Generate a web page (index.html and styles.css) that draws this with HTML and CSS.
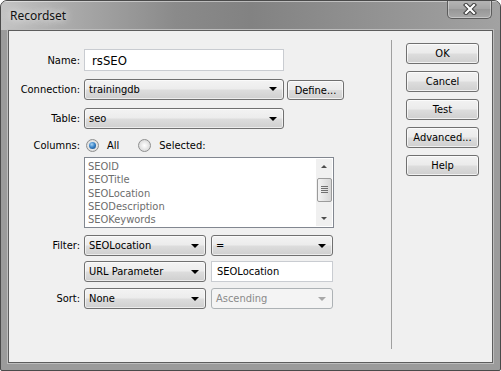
FILE: index.html
```html
<!DOCTYPE html>
<html>
<head>
<meta charset="utf-8">
<link rel="stylesheet" href="styles.css">
</head>
<body>
<div class="window">
  <div class="titlebar">
    <span class="title">Recordset</span>
    <div class="close">
      <svg width="18" height="12" viewBox="0 0 18 12">
        <path d="M5 2 L13 10 M13 2 L5 10" stroke="#3c3c3c" stroke-width="4.2" stroke-linecap="square" fill="none"/>
        <path d="M5 2 L13 10 M13 2 L5 10" stroke="#ffffff" stroke-width="2.2" stroke-linecap="square" fill="none"/>
      </svg>
    </div>
  </div>
  <div class="client">
    <div class="form">
      <div class="row r-name">
        <label class="lbl">Name:</label>
        <div class="textbox big">rsSEO</div>
      </div>
      <div class="row r-conn">
        <label class="lbl">Connection:</label>
        <div class="combo w200"><span>trainingdb</span><i class="arrow"></i></div>
        <div class="btn define">Define...</div>
      </div>
      <div class="row r-table">
        <label class="lbl">Table:</label>
        <div class="combo w200"><span>seo</span><i class="arrow"></i></div>
      </div>
      <div class="row r-cols">
        <label class="lbl">Columns:</label>
        <span class="radio on"></span><span class="rtext">All</span>
        <span class="radio"></span><span class="rtext">Selected:</span>
      </div>
      <div class="row r-list">
        <div class="listbox">
          <div class="items">
            <div>SEOID</div>
            <div>SEOTitle</div>
            <div>SEOLocation</div>
            <div>SEODescription</div>
            <div>SEOKeywords</div>
          </div>
          <div class="scroll">
            <svg class="sarrow" width="16" height="16" viewBox="0 0 16 16"><path d="M5 9 L11 9 L8 6 Z" fill="#4d4d4d"/></svg>
            <div class="thumb">
              <svg width="7" height="8" viewBox="0 0 7 8"><path d="M0 0.5H7M0 2.5H7M0 4.5H7M0 6.5H7" stroke="#6f6f6f" stroke-width="1"/></svg>
            </div>
            <svg class="sarrow down" width="16" height="16" viewBox="0 0 16 16"><path d="M5 7 L11 7 L8 10 Z" fill="#4d4d4d"/></svg>
          </div>
        </div>
      </div>
      <div class="row r-filter">
        <label class="lbl">Filter:</label>
        <div class="combo w123"><span>SEOLocation</span><i class="arrow"></i></div>
        <div class="combo w123"><span>=</span><i class="arrow"></i></div>
      </div>
      <div class="row r-url">
        <label class="lbl"></label>
        <div class="combo w123"><span>URL Parameter</span><i class="arrow"></i></div>
        <div class="textbox w123">SEOLocation</div>
      </div>
      <div class="row r-sort">
        <label class="lbl">Sort:</label>
        <div class="combo w123"><span>None</span><i class="arrow"></i></div>
        <div class="combo w123 disabled"><span>Ascending</span><i class="arrow"></i></div>
      </div>
    </div>
    <div class="side">
      <div class="btn">OK</div>
      <div class="btn">Cancel</div>
      <div class="btn">Test</div>
      <div class="btn">Advanced...</div>
      <div class="btn">Help</div>
    </div>
  </div>
</div>
</body>
</html>
```
FILE: styles.css
```css
html, body {
  margin: 0;
  padding: 0;
  background: #ffffff;
}
body {
  font-family: "DejaVu Sans Condensed", "DejaVu Sans", sans-serif;
  font-stretch: condensed;
  font-size: 11px;
  color: #000;
}
.window {
  width: 501px;
  height: 371px;
  box-sizing: border-box;
  border: 1px solid #4a4a4a;
  border-radius: 7px 7px 2px 2px;
  background: #9b9b9b;
  padding: 0 7px 7px 7px;
  display: flex;
  flex-direction: column;
  overflow: hidden;
}
.titlebar {
  height: 29px;
  margin: 0 -7px;
  padding: 0 8px 0 9px;
  background: linear-gradient(90deg, #c4c4c4 0%, #adadad 12%, #8a8a8a 35%, #828282 50%, #8f8f8f 70%, #a2a2a2 100%);
  display: flex;
  justify-content: space-between;
  align-items: flex-start;
  box-shadow: inset 0 1px 0 rgba(255,255,255,0.45);
}
.title {
  font-family: "Noto Sans", "Open Sans", sans-serif;
  font-stretch: normal;
  font-size: 12px;
  margin-top: 6px;
  color: #111;
  text-shadow: 0 0 6px #e8e8e8, 0 0 10px #e0e0e0;
}
.close {
  width: 43px;
  height: 18px;
  margin-top: -1px;
  border: 1px solid #5c5c5c;
  border-top: none;
  border-radius: 0 0 5px 5px;
  background: linear-gradient(#b6b6b6, #a4a4a4 50%, #979797 51%, #a9a9a9);
  box-shadow: inset 0 0 0 1px rgba(255,255,255,0.35);
  display: flex;
  align-items: center;
  justify-content: center;
}
.client {
  flex: 1;
  border: 1px solid #5d5d5d;
  background: #f0f0f0;
  display: flex;
  box-shadow: 0 0 0 1px #bdbdbd;
}
.form {
  width: 382px;
  padding-top: 18px;
  display: flex;
  flex-direction: column;
}
.row {
  display: flex;
  align-items: center;
}
.lbl {
  width: 71px;
  margin-right: 4px;
  text-align: right;
  flex: none;
}
.r-conn { margin-top: 7px; }
.r-table { margin-top: 8px; }
.r-cols { margin-top: 7px; height: 19px; }
.r-list { margin-top: 2px; padding-left: 75px; }
.r-filter { margin-top: 7px; }
.r-url { margin-top: 5px; }
.r-sort { margin-top: 6px; }

.textbox {
  box-sizing: border-box;
  height: 21px;
  border: 1px solid #abadb3;
  border-top-color: #a0a3aa;
  background: #fff;
  padding: 0 5px;
  display: flex;
  align-items: center;
}
.textbox.big {
  width: 200px;
  height: 22px;
  font-size: 13px;
  padding-left: 7px;
  border-color: #c9ccd1;
}
.textbox.w123 { width: 122px; margin-left: 5px; font-size: 11px; padding-left: 5px; border-color: #c9ccd1; }

.combo {
  box-sizing: border-box;
  height: 21px;
  border: 1px solid #707070;
  border-radius: 3px;
  background: linear-gradient(#f3f3f3 0%, #ececec 48%, #dddddd 52%, #cfcfcf 100%);
  box-shadow: inset 0 0 0 1px rgba(255,255,255,0.6);
  display: flex;
  align-items: center;
  justify-content: space-between;
  padding: 0 5px 0 4px;
}
.w200 { width: 200px; }
.w123 { width: 122px; }
.combo + .combo { margin-left: 5px; }
.arrow {
  width: 0;
  height: 0;
  border-left: 4px solid transparent;
  border-right: 4px solid transparent;
  border-top: 4px solid #000;
  margin-right: 1px;
}
.combo.disabled {
  background: #f4f4f4;
  border-color: #adb2b5;
  color: #8a8a8a;
  box-shadow: none;
}
.combo.disabled .arrow { border-top-color: #a8a8a8; }

.btn {
  box-sizing: border-box;
  width: 73px;
  height: 21px;
  border: 1px solid #707070;
  border-radius: 3px;
  background: linear-gradient(#f2f2f2 0%, #ebebeb 48%, #dddddd 52%, #cfcfcf 100%);
  box-shadow: inset 0 0 0 1px rgba(255,255,255,0.7);
  display: flex;
  align-items: center;
  justify-content: center;
}
.btn.define {
  width: 57px;
  height: 20px;
  margin-left: 3px;
  margin-top: 2px;
}

.radio {
  box-sizing: border-box;
  width: 13px;
  height: 13px;
  border-radius: 50%;
  border: 1px solid #8e8f8f;
  background: radial-gradient(circle at 50% 50%, #ffffff 0%, #e9e9e9 45%, #cfcfcf 100%);
  position: relative;
  flex: none;
  margin-left: 2px;
}
.radio.on::after {
  content: "";
  position: absolute;
  left: 2px;
  top: 2px;
  width: 7px;
  height: 7px;
  border-radius: 50%;
  background: radial-gradient(circle at 40% 35%, #a9d4f5 0%, #3d86c9 45%, #0c3f7d 100%);
}
.rtext { margin-left: 8px; }
.rtext:nth-of-type(2) { margin-right: 17px; }

.listbox {
  box-sizing: border-box;
  width: 250px;
  height: 71px;
  border: 1px solid #828790;
  background: #fff;
  display: flex;
}
.items {
  flex: 1;
  padding: 2px 0 0 3px;
  color: #6d6d6d;
  font-size: 11px;
  line-height: 13.3px;
}
.scroll {
  width: 16px;
  margin: 1px 1px 1px 0;
  background: #f0f0f0;
  display: flex;
  flex-direction: column;
  align-items: center;
}
.thumb {
  box-sizing: border-box;
  width: 15px;
  height: 24px;
  margin-top: 3px;
  border: 1px solid #9b9b9b;
  border-radius: 2px;
  background: linear-gradient(90deg, #f3f3f3, #e4e4e4 50%, #d6d6d6);
  display: flex;
  align-items: center;
  justify-content: center;
}
.sarrow.down { margin-top: auto; }

.side {
  flex: 1;
  margin: 9px 0 13px;
  border-left: 1px solid #a0a0a0;
  padding: 3px 0 0 14px;
  display: flex;
  flex-direction: column;
  gap: 7px;
}
```
